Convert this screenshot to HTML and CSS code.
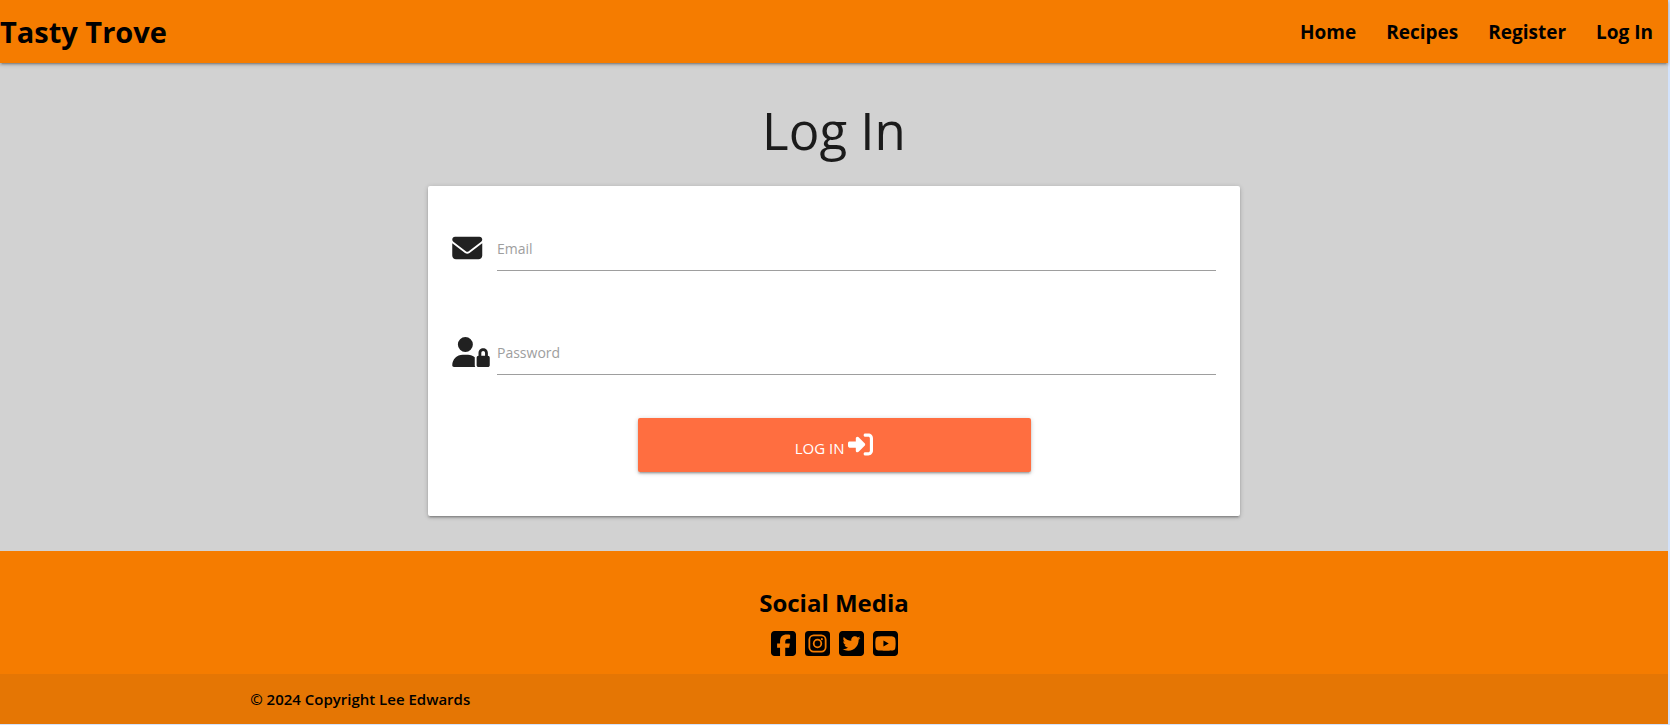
FILE: index.html
```html
<!DOCTYPE html>
<html lang="en">
<head>
<meta charset="utf-8">
<title>Tasty Trove - Log In</title>
<link rel="stylesheet" href="styles.css">
</head>
<body>
<div class="page">
  <nav class="navbar">
    <a class="brand" href="#">Tasty Trove</a>
    <ul class="nav-links">
      <li><a href="#">Home</a></li>
      <li><a href="#">Recipes</a></li>
      <li><a href="#">Register</a></li>
      <li><a href="#">Log In</a></li>
    </ul>
  </nav>

  <main class="main">
    <h1 class="title">Log In</h1>
    <form class="card">
      <div class="field">
        <svg class="field-icon" viewBox="0 0 640 512" aria-hidden="true"><path d="M48 64C21.5 64 0 85.5 0 112c0 15.1 7.1 29.3 19.2 38.4L236.8 313.6c11.4 8.5 27 8.5 38.4 0L492.8 150.4c12.1-9.1 19.2-23.3 19.2-38.4c0-26.5-21.5-48-48-48H48zM0 176V384c0 35.3 28.7 64 64 64H448c35.3 0 64-28.7 64-64V176L294.4 339.2c-22.8 17.1-54 17.1-76.8 0L0 176z"/></svg>
        <label class="field-label" for="email">Email</label>
        <input class="field-input" id="email" type="email">
      </div>
      <div class="field">
        <svg class="field-icon" viewBox="0 0 640 512" aria-hidden="true"><path d="M224 256A128 128 0 1 0 224 0a128 128 0 1 0 0 256zm-45.7 48C79.8 304 0 383.8 0 482.3C0 498.7 13.3 512 29.7 512H392.6c-5.4-9.4-8.6-20.3-8.6-32V352c0-2.1 .1-4.2 .3-6.3c-31-26-71-41.7-114.6-41.7H178.3zM528 240c17.7 0 32 14.3 32 32v48H496V272c0-17.7 14.3-32 32-32zm-80 32v48c-17.7 0-32 14.3-32 32V480c0 17.7 14.3 32 32 32H608c17.7 0 32-14.3 32-32V352c0-17.7-14.3-32-32-32V272c0-44.2-35.8-80-80-80s-80 35.8-80 80z"/></svg>
        <label class="field-label" for="password">Password</label>
        <input class="field-input" id="password" type="password">
      </div>
      <button class="submit" type="submit">LOG IN <svg class="submit-icon" viewBox="0 0 512 512" aria-hidden="true"><path d="M217.9 105.9L340.7 228.7c7.2 7.2 11.3 17.1 11.3 27.3s-4.1 20.1-11.3 27.3L217.9 406.1c-6.4 6.4-15 9.9-24 9.9c-18.7 0-33.9-15.2-33.9-33.9l0-62.1L32 320c-17.7 0-32-14.3-32-32l0-64c0-17.7 14.3-32 32-32l128 0 0-62.1c0-18.7 15.2-33.9 33.9-33.9c9 0 17.6 3.6 24 9.9zM352 416l64 0c17.7 0 32-14.3 32-32l0-256c0-17.7-14.3-32-32-32l-64 0c-17.7 0-32-14.3-32-32s14.3-32 32-32l64 0c53 0 96 43 96 96l0 256c0 53-43 96-96 96l-64 0c-17.7 0-32-14.3-32-32s14.3-32 32-32z"/></svg></button>
    </form>
  </main>

  <footer class="footer">
    <div class="social">
      <h2 class="social-title">Social Media</h2>
      <div class="social-links">
        <a href="#" aria-label="Facebook"><svg class="social-icon" viewBox="0 0 448 512"><path d="M64 32C28.7 32 0 60.7 0 96V416c0 35.3 28.7 64 64 64h98.2V334.2H109.4V256h52.8V222.3c0-87.1 39.4-127.5 125-127.5c16.2 0 44.2 3.2 55.7 6.4V172c-6-.6-16.5-1-29.6-1c-42 0-58.2 15.9-58.2 57.2V256h83.6l-14.4 78.2H255V480H384c35.3 0 64-28.7 64-64V96c0-35.3-28.7-64-64-64H64z"/></svg></a>
        <a href="#" aria-label="Instagram"><svg class="social-icon" viewBox="0 0 448 512"><rect y="32" width="448" height="448" rx="64"/><g class="cutout"><rect x="78" y="110" width="292" height="292" rx="78"/><circle cx="224" cy="256" r="68"/></g><circle class="cutout-dot" cx="302" cy="178" r="19"/></svg></a>
        <a href="#" aria-label="Twitter"><svg class="social-icon" viewBox="0 0 448 512"><path d="M64 32C28.7 32 0 60.7 0 96V416c0 35.3 28.7 64 64 64H384c35.3 0 64-28.7 64-64V96c0-35.3-28.7-64-64-64H64zM351.3 199.3v0c0 86.7-66 186.6-186.6 186.6c-37.2 0-71.7-10.8-100.7-29.4c5.3 .6 10.4 .8 15.8 .8c30.7 0 58.9-10.4 81.4-28c-28.8-.6-53-19.5-61.3-45.5c10.1 1.5 19.2 1.5 29.6-1.2c-30-6.1-52.5-32.5-52.5-64.4v-.8c8.7 4.9 18.9 7.9 29.6 8.3c-18-12-29.2-32.5-29.2-54.7c0-12.2 3.2-23.4 8.9-33.1c32.3 39.8 80.8 65.8 135.2 68.6c-9.3-44.5 24-80.6 64-80.6c18.9 0 35.9 7.9 47.9 20.7c14.8-2.8 29-8.3 41.6-15.8c-4.9 15.2-15.2 28-28.8 36.1c13.2-1.4 26-5.1 37.8-10.2c-8.9 13.1-20.1 24.7-32.9 34c.2 2.8 .2 5.7 .2 8.5z"/></svg></a>
        <a href="#" aria-label="YouTube"><svg class="social-icon" viewBox="0 0 448 512"><path d="M282 256.2l-95.2-54.1V310.3L282 256.2zM384 32H64C28.7 32 0 60.7 0 96V416c0 35.3 28.7 64 64 64H384c35.3 0 64-28.7 64-64V96c0-35.3-28.7-64-64-64zm14.4 136.1c7.6 28.6 7.6 88.2 7.6 88.2s0 59.6-7.6 88.1c-4.2 15.8-16.5 27.7-32.2 31.9C337.9 384 224 384 224 384s-113.9 0-142.2-7.6c-15.7-4.2-28-16.1-32.2-31.9C42 315.9 42 256.3 42 256.3s0-59.7 7.6-88.2c4.2-15.8 16.5-28.2 32.2-32.4C110.1 128 224 128 224 128s113.9 0 142.2 7.7c15.7 4.2 28 16.6 32.2 32.4z"/></svg></a>
      </div>
    </div>
    <div class="copyright">
      <p class="copyright-text">© 2024 Copyright Lee Edwards</p>
    </div>
  </footer>
</div>
</body>
</html>
```
FILE: styles.css
```css
* {
  box-sizing: border-box;
}

body {
  margin: 0;
  background: #d3e3fd;
  font-family: "Open Sans", "Noto Sans", sans-serif;
  font-size: 15px;
  line-height: 24px;
}

a {
  color: #000;
  text-decoration: none;
}

.page {
  margin-right: 2px;
  background: #d2d2d2;
}

.navbar {
  position: relative;
  display: flex;
  align-items: center;
  justify-content: space-between;
  height: 63px;
  background: #f57c00;
  box-shadow: 0 2px 2px rgba(0, 0, 0, 0.14), 0 3px 1px -2px rgba(0, 0, 0, 0.12), 0 1px 5px rgba(0, 0, 0, 0.2);
}

.brand {
  font-size: 29px;
  font-weight: 700;
  line-height: 40px;
}

.nav-links {
  display: flex;
  gap: 30px;
  margin: 0;
  padding: 0 15px;
  list-style: none;
  font-size: 19px;
  font-weight: 700;
}

.main {
  padding: 30px 11px 35px;
}

.title {
  margin: 0 0 18px;
  color: rgba(0, 0, 0, 0.87);
  font-size: 51px;
  font-weight: 400;
  line-height: 75px;
  text-align: center;
}

.card {
  display: flex;
  flex-direction: column;
  width: calc(50% - 11px);
  margin: 0 auto;
  padding: 39px 24px 44px;
  background: #fff;
  border-radius: 2px;
  box-shadow: 0 2px 2px rgba(0, 0, 0, 0.14), 0 3px 1px -2px rgba(0, 0, 0, 0.12), 0 1px 5px rgba(0, 0, 0, 0.2);
}

.field {
  display: grid;
  grid-template-columns: 38px 1fr;
  column-gap: 7px;
  align-items: center;
  height: 64px;
  margin-bottom: 40px;
  padding-bottom: 18px;
}

.field-icon {
  width: 38px;
  height: 30px;
  fill: #212121;
}

.field-label,
.field-input {
  grid-area: 1 / 2;
}

.field-label {
  padding-top: 2px;
  color: #9e9e9e;
  font-size: 14px;
  pointer-events: none;
}

.field-input {
  width: 100%;
  height: 46px;
  padding: 0;
  border: 0;
  border-bottom: 1px solid #9e9e9e;
  background: transparent;
  font: inherit;
  outline: none;
}

.field:last-of-type {
  margin-bottom: 25px;
}

.submit {
  align-self: center;
  width: 393px;
  max-width: 100%;
  height: 54px;
  padding: 2px 6px 0;
  border: 0;
  border-radius: 2px;
  background: #ff6e40;
  color: #fff;
  font: inherit;
  box-shadow: 0 2px 2px rgba(0, 0, 0, 0.14), 0 3px 1px -2px rgba(0, 0, 0, 0.12), 0 1px 5px rgba(0, 0, 0, 0.2);
}

.submit-icon {
  width: 25px;
  height: 25px;
  fill: #fff;
  vertical-align: -3px;
}

.footer {
  background: #f57c00;
}

.social {
  padding: 36px 0 16px;
  text-align: center;
}

.social-title {
  margin: 0 0 10px;
  font-size: 24px;
  font-weight: 700;
  line-height: 32px;
}

.social-links {
  display: flex;
  justify-content: center;
  gap: 9px;
}

.social-links a {
  display: flex;
}

.social-icon {
  width: 25px;
  height: 29px;
}

.cutout {
  fill: none;
  stroke: #f57c00;
  stroke-width: 32;
}

.cutout-dot {
  fill: #f57c00;
}

.copyright {
  padding: 13px 15%;
  background: #e57604;
}

.copyright-text {
  margin: 0;
  font-size: 15px;
  font-weight: 600;
}
```
